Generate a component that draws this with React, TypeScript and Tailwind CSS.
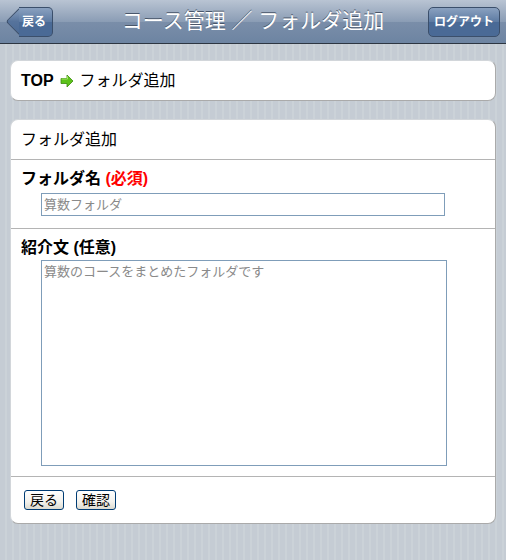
import React from 'react';

const jp = "font-['Liberation_Sans','Noto_Sans_CJK_JP',sans-serif]";

function BackArrow() {
  return (
    <svg width="14" height="14" viewBox="0 0 14 14" className="inline-block">
      <path d="M1 4.5h6V1l6 6-6 6V9.5H1z" fill="#5cc21a" stroke="#3a8a0c" strokeWidth="0.8" />
      <path d="M1.5 5h6V2.2" fill="none" stroke="#b6f07a" strokeWidth="0.8" />
    </svg>
  );
}

export default function App() {
  return (
    <div
      className={`w-[506px] h-[560px] overflow-hidden ${jp} bg-[repeating-linear-gradient(90deg,#c5ccd4_0px,#c5ccd4_5px,#cbd2d8_5px,#cbd2d8_7px)]`}
    >
      {/* Header */}
      <header className="relative h-[44px] flex items-center justify-between px-[6px] border-b border-[#2d3642] bg-[linear-gradient(180deg,#b9c4d3_0%,#8b9db5_50%,#7a8ea9_51%,#6d84a2_100%)]">
        <div className="relative h-[30px] flex items-center">
          <div className="absolute left-[4px] top-[4px] w-[21px] h-[21px] rotate-45 rounded-[3px] border border-[#3b4f6b] bg-[linear-gradient(135deg,#8aa1c0_0%,#56739c_50%,#4a6a96_100%)]" />
          <div className="relative ml-[13px] h-[30px] w-[34px] pr-[3px] flex items-center justify-center rounded-r-[5px] border border-l-0 border-[#3b4f6b] bg-[linear-gradient(180deg,#8aa1c0_0%,#5c7aa2_50%,#4a6a96_51%,#4a6a96_100%)] text-white text-[12px] font-bold">
            戻る
          </div>
        </div>
        <h1 className="absolute left-0 right-0 top-[8px] text-center text-white text-[21px] leading-[26px] pointer-events-none [text-shadow:0_-1px_0_#49566a]">
          コース管理 ／ フォルダ追加
        </h1>
        <div className="relative h-[30px] w-[72px] flex items-center justify-center rounded-[5px] border border-[#3b4f6b] bg-[linear-gradient(180deg,#8aa1c0_0%,#5c7aa2_50%,#4a6a96_51%,#4a6a96_100%)] text-white text-[12px] font-bold">
          ログアウト
        </div>
      </header>

      <main className="px-[10px] pt-[16px] flex flex-col gap-[18px]">
        {/* Breadcrumb */}
        <div className="h-[41px] flex items-center px-[10px] gap-[6px] bg-white rounded-[8px] border border-[#d2d6da] border-b-[#aaaaaa] border-r-[#aaaaaa] text-[16px] text-black">
          <span className="font-bold">TOP</span>
          <BackArrow />
          <span>フォルダ追加</span>
        </div>

        {/* Form */}
        <div className="bg-white rounded-[8px] border border-[#d2d6da] border-b-[#aaaaaa] border-r-[#aaaaaa] text-black">
          <div className="h-[40px] flex items-center px-[10px] text-[16px] border-b border-[#b4b4b4]">
            フォルダ追加
          </div>
          <div className="px-[10px] pt-[8px] pb-[12px] border-b border-[#b4b4b4]">
            <div className="text-[16px] font-bold leading-[22px]">
              フォルダ名 <span className="text-[#ff0000]">(必須)</span>
            </div>
            <div className="ml-[20px] mt-[3px] w-[404px] h-[23px] border border-[#7f9db9] px-[2px] flex items-center text-[13px] text-[#8a8a8a]">
              算数フォルダ
            </div>
          </div>
          <div className="px-[10px] pt-[8px] pb-[10px] border-b border-[#b4b4b4]">
            <div className="text-[16px] font-bold leading-[22px]">紹介文 (任意)</div>
            <div className="ml-[20px] mt-[1px] w-[406px] h-[206px] border border-[#7f9db9] px-[2px] pt-[1px] text-[13px] text-[#8a8a8a]">
              算数のコースをまとめたフォルダです
            </div>
          </div>
          <div className="h-[46px] flex items-center gap-[12px] px-[13px]">
            <button className="h-[20px] px-[5px] rounded-[3px] border border-[#003c74] bg-[linear-gradient(180deg,#ffffff_0%,#f3f2ed_60%,#dcdad0_100%)] text-[14px] leading-[18px] text-black">
              戻る
            </button>
            <button className="h-[20px] px-[5px] rounded-[3px] border border-[#003c74] bg-[linear-gradient(180deg,#ffffff_0%,#f3f2ed_60%,#dcdad0_100%)] text-[14px] leading-[18px] text-black">
              確認
            </button>
          </div>
        </div>
      </main>
    </div>
  );
}
